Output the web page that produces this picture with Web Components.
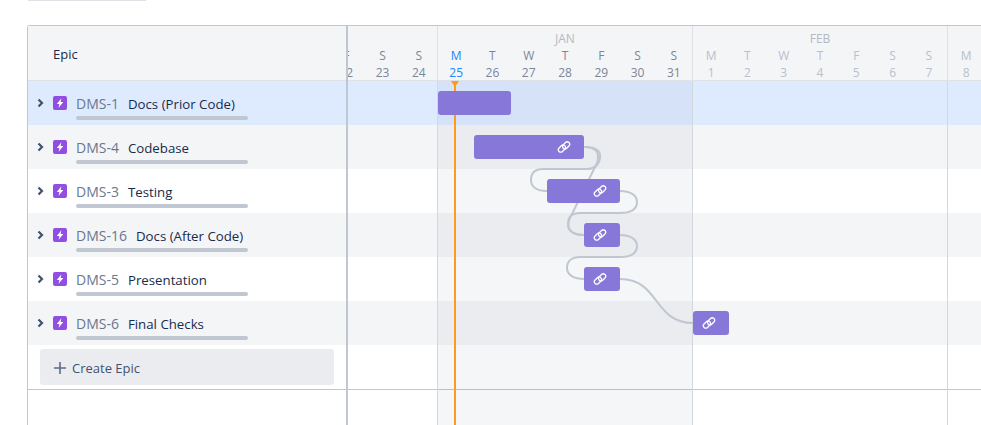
<!DOCTYPE html>
<html>
<head>
<meta charset="utf-8">
<title>Roadmap</title>
<style>
    html, body { margin: 0; height: 100%; background: #fff; overflow: hidden; }
    body { font-family: "Open Sans", "Noto Sans", sans-serif; color: #172b4d; }
</style>
</head>
<body>

<template id="gantt-chart-tpl">
    <style>
        :host { display: block; height: 425px; overflow: hidden; }
        .tab { width: 118px; height: 1px; margin-left: 28px; background: #dfe1e6; }
        .frame {
            display: flex;
            height: 400px;
            margin: 24px 0 0 27px;
            border-top: 1px solid #c1c7d0;
            border-left: 1px solid #c1c7d0;
            border-top-left-radius: 3px;
            box-sizing: border-box;
        }
        .left { flex: 0 0 318px; }
        .right { flex: 1; min-width: 0; border-left: 2px solid #c1c7d0; }
    </style>
    <div class="tab"></div>
    <div class="frame">
        <div class="left"><slot name="list"></slot></div>
        <div class="right"><slot name="timeline"></slot></div>
    </div>
</template>

<template id="epic-list-tpl">
    <style>
        :host { display: block; }
        .head {
            padding: 1px 0 0 25px;
            box-sizing: border-box;
            height: 55px;
            display: flex;
            align-items: center;
            background: #f4f5f7;
            border-bottom: 1px solid #dfe1e6;
            font-size: 13px;
            line-height: 18px;
        }
        .foot { padding: 4px 12px; box-sizing: border-box; border-bottom: 1px solid #c1c7d0; height: 45px; }
    </style>
    <div class="head">Epic</div>
    <slot></slot>
    <div class="foot"><slot name="foot"></slot></div>
</template>

<template id="epic-row-tpl">
    <style>
        :host { display: block; height: 44px; background: #fff; }
        :host([tone="grey"]) { background: #f4f5f7; }
        :host([tone="selected"]) { background: #deebff; }
        .row { display: flex; height: 100%; padding-left: 8px; box-sizing: border-box; }
        .chevron { width: 9px; height: 10px; margin: 17px 8px 0 0; flex: none; }
        .icon { width: 14px; height: 14px; margin-top: 15px; flex: none; }
        .body { margin-left: 9px; width: 172px; padding-top: 13px; }
        .text { display: flex; align-items: baseline; gap: 9px; font-size: 13.25px; line-height: 20px; white-space: nowrap; }
        .key { color: #6b778c; font-size: 14px; }
        .bar { height: 4px; margin-top: 2px; border-radius: 2px; background: #c1c7d0; }
    </style>
    <div class="row">
        <svg class="chevron" viewBox="0 0 9 10"><path d="M2.5 1.5 6 5 2.5 8.5" fill="none" stroke="#42526e" stroke-width="2.2"/></svg>
        <svg class="icon" viewBox="0 0 14 14"><rect width="14" height="14" rx="2" fill="#904ee2"/><path d="M8.4 2.2 3.8 7.9h2.6L5.6 11.8l4.7-5.9H7.6z" fill="#fff"/></svg>
        <div class="body">
            <div class="text"><span class="key"></span><span class="title"></span></div>
            <div class="bar"></div>
        </div>
    </div>
</template>

<template id="create-epic-tpl">
    <style>
        :host { display: block; }
        .btn {
            display: flex;
            align-items: center;
            height: 36px;
            padding: 1px 0 0 14px;
            box-sizing: border-box;
            border-radius: 3px;
            background: #ebecf0;
            color: #42526e;
            font-size: 13px;
        }
        svg { width: 12px; height: 12px; margin-right: 6px; }
    </style>
    <div class="btn">
        <svg viewBox="0 0 12 12"><path d="M6 0v12M0 6h12" stroke="#5e6c84" stroke-width="1.6"/></svg>
        <slot></slot>
    </div>
</template>

<template id="week-head-tpl">
    <style>
        :host {
            display: block;
            flex: 0 0 255px;
            box-sizing: border-box;
            height: 54px;
            border-left: 1px solid #dfe1e6;
            font-size: 12px;
            color: var(--day-color, #7a869a);
        }
        .month { height: 21px; padding-top: 4px; box-sizing: border-box; text-align: center; color: #b3bac5; line-height: 17px; }
        .days { display: grid; grid-template-columns: repeat(7, 1fr); text-align: center; line-height: 17px; }
        .today { color: #2684ff; }
    </style>
    <div class="month"></div>
    <div class="days"></div>
</template>

<template id="gantt-timeline-tpl">
    <style>
        :host { display: block; position: relative; height: 100%; overflow: hidden; }
        .head { display: flex; margin-left: -166px; height: 54px; background: #f4f5f7; border-bottom: 1px solid #dfe1e6; }
        .lanes { position: relative; }
        .foot { height: 45px; box-sizing: border-box; border-bottom: 1px solid #c1c7d0; }
        .grid { position: absolute; top: 55px; bottom: 0; left: 0; right: 0; pointer-events: none; }
        .sprint { position: absolute; top: 0; bottom: 0; left: 89px; width: 256px; background: rgba(9, 30, 66, .04); box-sizing: border-box; border-left: 1px solid #d3d8df; border-right: 1px solid #d3d8df; }
        .rule { position: absolute; top: 0; bottom: 0; left: 599px; width: 1px; background: #d3d8df; }
        .links { position: absolute; left: 0; top: 55px; width: 633px; height: 309px; }
        .today { position: absolute; top: 55px; bottom: 0; left: 106px; width: 2px; background: #ff991f; }
        .today::before {
            content: "";
            position: absolute;
            top: 0;
            left: -3px;
            border-left: 4px solid transparent;
            border-right: 4px solid transparent;
            border-top: 6px solid #ff991f;
        }
    </style>
    <div class="head"><slot name="head"></slot></div>
    <div class="lanes"><slot></slot></div>
    <div class="foot"></div>
    <div class="grid"><div class="sprint"></div><div class="rule"></div></div>
    <svg class="links" viewBox="348 81 633 309" fill="none" stroke="#c1c7d0" stroke-width="2">
        <path d="M584 147C598 147 601 152 600 158 599 164 595 169 587 169H543C535 169 531 173 531 180 531 187 537 191 547 191"/>
        <path d="M584 147C597 147 600 153 597 163L573 212C564 226 568 235 584 235"/>
        <path d="M620 191C630 191 637 195 637 202 637 209 631 213 620 213H580C572 213 568 217 568 224 568 231 574 235 584 235"/>
        <path d="M620 235C630 235 637 239 637 246 637 253 631 257 620 257H580C572 257 567 261 567 268 567 275 574 279 584 279"/>
        <path d="M620 279C660 279 653 323 693 323"/>
    </svg>
    <div class="today"></div>
</template>

<template id="gantt-lane-tpl">
    <style>
        :host { display: block; position: relative; height: 44px; background: #fff; }
        :host([tone="grey"]) { background: #f4f5f7; }
        :host([tone="selected"]) { background: #deebff; }
    </style>
    <slot></slot>
</template>

<template id="gantt-bar-tpl">
    <style>
        :host {
            position: absolute;
            top: 10px;
            height: 24px;
            z-index: 2;
            border-radius: 3px;
            background: #8777d9;
        }
        svg { position: absolute; right: 13px; top: 5px; width: 14px; height: 14px; }
    </style>
    <svg viewBox="0 0 14 14" fill="none" stroke="#fff" stroke-width="1.3">
        <rect x="0.9" y="6.2" width="8" height="4.8" rx="2.4" transform="rotate(-45 4.9 8.6)"/>
        <rect x="5.1" y="3" width="8" height="4.8" rx="2.4" transform="rotate(-45 9.1 5.4)"/>
    </svg>
</template>

<gantt-chart>
    <epic-list slot="list">
        <epic-row tone="selected" key="DMS-1" title="Docs (Prior Code)"></epic-row>
        <epic-row tone="grey" key="DMS-4" title="Codebase"></epic-row>
        <epic-row key="DMS-3" title="Testing"></epic-row>
        <epic-row tone="grey" key="DMS-16" title="Docs (After Code)"></epic-row>
        <epic-row key="DMS-5" title="Presentation"></epic-row>
        <epic-row tone="grey" key="DMS-6" title="Final Checks"></epic-row>
        <create-epic slot="foot">Create Epic</create-epic>
    </epic-list>
    <gantt-timeline slot="timeline">
        <week-head slot="head" start="18" show="4-6"></week-head>
        <week-head slot="head" month="JAN" start="25" today="25"></week-head>
        <week-head slot="head" month="FEB" start="1" faded></week-head>
        <week-head slot="head" start="8" show="0-0" faded></week-head>
        <gantt-lane tone="selected"><gantt-bar from="438" to="511" plain></gantt-bar></gantt-lane>
        <gantt-lane tone="grey"><gantt-bar from="474" to="584"></gantt-bar></gantt-lane>
        <gantt-lane><gantt-bar from="547" to="620"></gantt-bar></gantt-lane>
        <gantt-lane tone="grey"><gantt-bar from="584" to="620"></gantt-bar></gantt-lane>
        <gantt-lane><gantt-bar from="584" to="620"></gantt-bar></gantt-lane>
        <gantt-lane tone="grey"><gantt-bar from="693" to="729"></gantt-bar></gantt-lane>
    </gantt-timeline>
</gantt-chart>

<script>
    function shadowFrom(el, id) {
        el.attachShadow({ mode: 'open' });
        el.shadowRoot.appendChild(document.getElementById(id).content.cloneNode(true));
        return el.shadowRoot;
    }

    class GanttChart extends HTMLElement {
        constructor() { super(); shadowFrom(this, 'gantt-chart-tpl'); }
    }

    class EpicList extends HTMLElement {
        constructor() { super(); shadowFrom(this, 'epic-list-tpl'); }
    }

    class EpicRow extends HTMLElement {
        constructor() { super(); shadowFrom(this, 'epic-row-tpl'); }
        connectedCallback() {
            this.shadowRoot.querySelector('.key').textContent = this.getAttribute('key');
            this.shadowRoot.querySelector('.title').textContent = this.getAttribute('title');
        }
    }

    class CreateEpic extends HTMLElement {
        constructor() { super(); shadowFrom(this, 'create-epic-tpl'); }
    }

    class WeekHead extends HTMLElement {
        constructor() { super(); shadowFrom(this, 'week-head-tpl'); }
        connectedCallback() {
            const root = this.shadowRoot;
            const letters = ['M', 'T', 'W', 'T', 'F', 'S', 'S'];
            const start = Number(this.getAttribute('start'));
            const today = this.getAttribute('today');
            // only the days inside the window get a label
            const [first, last] = (this.getAttribute('show') || '0-6').split('-').map(Number);
            root.querySelector('.month').textContent = this.getAttribute('month') || '';
            if (this.hasAttribute('faded')) this.style.setProperty('--day-color', '#b9c0cb');

            const cell = (i, text) => {
                const shown = i >= first && i <= last;
                const cls = String(start + i) === today ? ' class="today"' : '';
                return '<span' + cls + '>' + (shown ? text : '') + '</span>';
            };
            let html = '';
            letters.forEach((l, i) => { html += cell(i, l); });
            letters.forEach((l, i) => { html += cell(i, start + i); });
            root.querySelector('.days').innerHTML = html;
        }
    }

    class GanttTimeline extends HTMLElement {
        constructor() { super(); shadowFrom(this, 'gantt-timeline-tpl'); }
    }

    class GanttLane extends HTMLElement {
        constructor() { super(); shadowFrom(this, 'gantt-lane-tpl'); }
    }

    class GanttBar extends HTMLElement {
        constructor() { super(); shadowFrom(this, 'gantt-bar-tpl'); }
        connectedCallback() {
            // from / to are page x positions, the lanes begin at x=348
            const from = Number(this.getAttribute('from'));
            const to = Number(this.getAttribute('to'));
            this.style.left = (from - 348) + 'px';
            this.style.width = (to - from) + 'px';
            if (this.hasAttribute('plain')) this.shadowRoot.querySelector('svg').style.display = 'none';
        }
    }

    customElements.define('gantt-chart', GanttChart);
    customElements.define('epic-list', EpicList);
    customElements.define('epic-row', EpicRow);
    customElements.define('create-epic', CreateEpic);
    customElements.define('week-head', WeekHead);
    customElements.define('gantt-timeline', GanttTimeline);
    customElements.define('gantt-lane', GanttLane);
    customElements.define('gantt-bar', GanttBar);
</script>
</body>
</html>
